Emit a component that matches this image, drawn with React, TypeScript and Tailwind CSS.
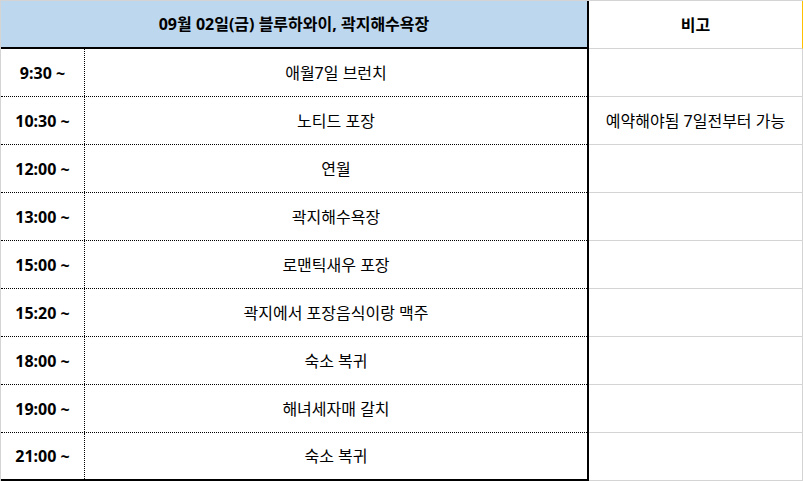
const rows = [
  { time: '9:30 ~', plan: '애월7일 브런치', note: '' },
  { time: '10:30 ~', plan: '노티드 포장', note: '예약해야됨 7일전부터 가능' },
  { time: '12:00 ~', plan: '연월', note: '' },
  { time: '13:00 ~', plan: '곽지해수욕장', note: '' },
  { time: '15:00 ~', plan: '로맨틱새우 포장', note: '' },
  { time: '15:20 ~', plan: '곽지에서 포장음식이랑 맥주', note: '' },
  { time: '18:00 ~', plan: '숙소 복귀', note: '' },
  { time: '19:00 ~', plan: '해녀세자매 갈치', note: '' },
  { time: '21:00 ~', plan: '숙소 복귀', note: '' },
];

const font = { fontFamily: '"Noto Sans", "Noto Sans CJK KR", sans-serif' };

export default function App() {
  return (
    <div
      className="flex h-[481px] w-[803px] border-t border-l border-[#d4d4d4] bg-white text-[16px] leading-none text-black"
      style={font}
    >
      {/* schedule block */}
      <div className="flex w-[588px] flex-col border-r-2 border-black">
        <div className="flex h-[48px] items-center justify-center border-b-2 border-black bg-[#bdd7ee] font-bold">
          09월 02일(금) 블루하와이, 곽지해수욕장
        </div>
        {rows.map((r, i) => (
          <div
            key={i}
            className={`flex h-[48px] ${
              i === rows.length - 1 ? 'border-b-2 border-black' : 'border-b border-dotted border-black'
            }`}
          >
            <div className="flex w-[84px] items-center justify-center border-r border-dotted border-black font-bold">
              {r.time}
            </div>
            <div className="flex flex-1 items-center justify-center">{r.plan}</div>
          </div>
        ))}
      </div>

      {/* notes column */}
      <div className="flex w-[214px] flex-col">
        <div className="flex h-[48px] items-center justify-center border-r border-b border-r-[#ffc000] border-b-[#d4d4d4] font-bold">
          비고
        </div>
        {rows.map((r, i) => (
          <div
            key={i}
            className="flex h-[48px] items-center justify-center border-r border-b border-[#d4d4d4]"
          >
            {r.note}
          </div>
        ))}
      </div>
    </div>
  );
}
